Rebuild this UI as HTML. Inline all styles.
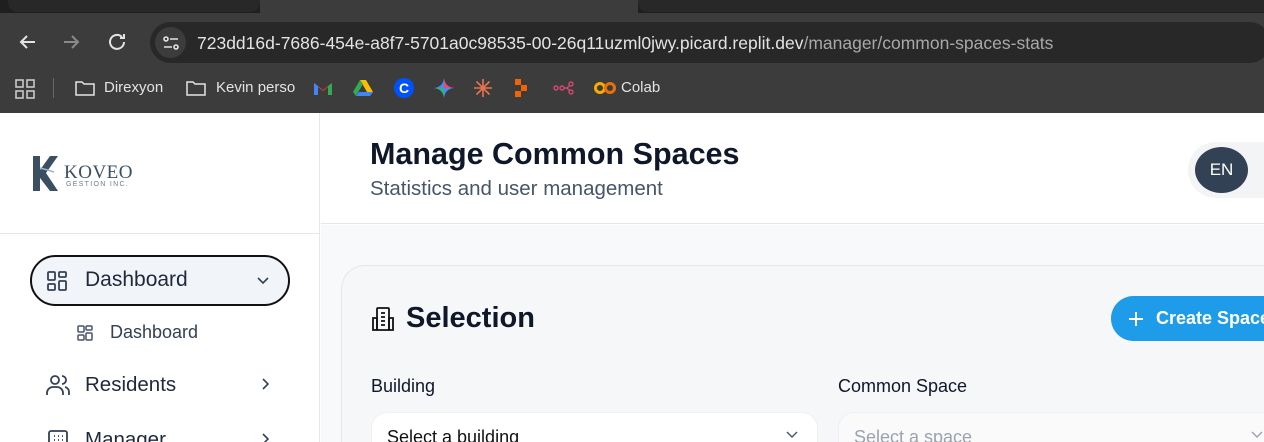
<!DOCTYPE html>
<html style="width:1264px;height:442px;overflow:hidden"><head><style>
*{box-sizing:border-box;margin:0;padding:0}
body{width:1264px;height:442px;overflow:hidden;font-family:"Liberation Sans",sans-serif;background:#fff}
#w{position:relative;width:1264px;height:442px;overflow:hidden}
.abs{position:absolute}
.bm{position:absolute;top:79px;color:#e3e3e3;font-size:15px}
</style></head><body><div id="w">
<div class="abs" style="left:0;top:0;width:1264px;height:113px;background:#3c3c3c"></div>
<div class="abs" style="left:0;top:0;width:1264px;height:13px;background:#1f1f1f"></div>
<div class="abs" style="left:8px;top:-10px;width:252px;height:22px;background:#282828;border-radius:0 0 10px 10px"></div>
<div class="abs" style="left:260px;top:0;width:378px;height:13px;background:#3c3c3c"></div>
<div class="abs" style="left:638px;top:-10px;width:640px;height:22px;background:#282828;border-radius:0 0 0 10px"></div>
<div class="abs" style="left:0;top:13px;width:1264px;height:100px;background:#3c3c3c;border-radius:10px 10px 0 0"></div>
<svg class="abs" style="left:14px;top:30px" width="120" height="24" fill="none" stroke="#e3e3e3" stroke-width="2">
<path d="M21 12H7M13 6l-6 6 6 6"/>
<path d="M50 12h14M58 6l6 6-6 6" stroke="#8a8a8a"/>
<path d="M110 12a7 7 0 1 1-2-5M110 4v4h-4"/>
</svg>
<div class="abs" style="left:150px;top:22px;width:1120px;height:41px;background:#282828;border-radius:21px"></div>
<div class="abs" style="left:155px;top:27px;width:31px;height:31px;background:#3c3c3c;border-radius:50%"></div>
<svg class="abs" style="left:162px;top:34px" width="18" height="18" fill="none" stroke="#e3e3e3" stroke-width="1.6"><circle cx="4" cy="5" r="2"/><path d="M8 5h8M2 13h8"/><circle cx="14" cy="13" r="2"/></svg>
<div class="abs" style="left:197px;top:33px;color:#e3e3e3;font-size:17.5px;white-space:nowrap">723dd16d-7686-454e-a8f7-5701a0c98535-00-26q11uzml0jwy.picard.replit.dev<span style="color:#a8a8a8">/manager/common-spaces-stats</span></div>
<svg class="abs" style="left:15px;top:79px" width="20" height="20" fill="none" stroke="#c8c8c8" stroke-width="1.6"><rect x="1" y="1" width="7" height="7"/><rect x="12" y="1" width="7" height="7"/><rect x="1" y="12" width="7" height="7"/><rect x="12" y="12" width="7" height="7"/></svg>
<div class="abs" style="left:53px;top:78px;width:1px;height:20px;background:#666"></div>
<svg class="abs" style="left:75px;top:80px" width="20" height="16" fill="none" stroke="#e3e3e3" stroke-width="1.5"><path d="M1 2h6l2 2h10v11H1z"/></svg>
<div class="bm" style="left:104px">Direxyon</div>
<svg class="abs" style="left:186px;top:80px" width="20" height="16" fill="none" stroke="#e3e3e3" stroke-width="1.5"><path d="M1 2h6l2 2h10v11H1z"/></svg>
<div class="bm" style="left:216px">Kevin perso</div>
<svg class="abs" style="left:313px;top:80px" width="20" height="16"><path d="M1 3v12h4V7l5 4 5-4v8h4V3l-9 7z" fill="#ea4335"/><path d="M1 3l4 3v9H1z" fill="#4285f4"/><path d="M19 3l-4 3v9h4z" fill="#34a853"/></svg>
<svg class="abs" style="left:353px;top:79px" width="20" height="18"><path d="M7 1h6l7 12h-6z" fill="#fbbc04"/><path d="M7 1L0 13l3 4 7-12z" fill="#34a853"/><path d="M3 17h14l3-4H6z" fill="#4285f4"/></svg>
<div class="abs" style="left:394px;top:78px;width:20px;height:20px;border-radius:50%;background:#0052ff;color:#fff;font-weight:bold;font-size:14px;text-align:center;line-height:20px">C</div>
<svg class="abs" style="left:434px;top:78px" width="20" height="20"><path d="M10 0Q11 9 20 10Q11 11 10 20Q9 11 0 10Q9 9 10 0z" fill="#4a8af4"/><path d="M10 0Q11 9 20 10L10 10z" fill="#e94b6c"/><path d="M0 10Q9 11 10 20L10 10z" fill="#2bb673"/></svg>
<svg class="abs" style="left:473px;top:78px" width="20" height="20" stroke="#e8744f" stroke-width="1.6"><path d="M10 1v18M1 10h18M3.5 3.5l13 13M16.5 3.5l-13 13"/></svg>
<svg class="abs" style="left:515px;top:79px" width="16" height="18" fill="#f26207"><rect x="0" y="0" width="6" height="6"/><rect x="6" y="6" width="6" height="6"/><rect x="0" y="12" width="6" height="6"/></svg>
<svg class="abs" style="left:553px;top:81px" width="22" height="14" fill="none" stroke="#d44a70" stroke-width="1.4"><circle cx="3" cy="7" r="2"/><circle cx="9" cy="7" r="2"/><circle cx="18" cy="3" r="2"/><circle cx="18" cy="11" r="2"/><path d="M11 7h3l3-3M14 7l3 3"/></svg>
<svg class="abs" style="left:594px;top:80px" width="22" height="16" fill="none" stroke="#f9ab00" stroke-width="3"><circle cx="6" cy="8" r="4.5"/><circle cx="16" cy="8" r="4.5" stroke="#e8710a"/></svg>
<div class="bm" style="left:621px">Colab</div>

<div class="abs" style="left:0;top:113px;width:320px;height:329px;background:#fff;border-right:1px solid #e5e7eb"></div>
<div class="abs" style="left:0;top:233px;width:319px;height:1px;background:#e5e7eb"></div>
<svg class="abs" style="left:32px;top:156px" width="30" height="35"><path d="M1 0h7v14L18 0h8L14 17l12 18h-8L8 22v13H1z" fill="#3b4f63"/><path d="M8 12q8 2 14 4" stroke="#9fb5c0" stroke-width="1.5" fill="none"/></svg>
<div class="abs" style="left:64px;top:162px;font-family:'Liberation Serif',serif;font-size:19px;color:#3b4f63;letter-spacing:0.5px">KOVEO</div>
<div class="abs" style="left:66px;top:181px;font-size:7px;color:#6b7c8a;letter-spacing:1.3px">GESTION INC.</div>
<div class="abs" style="left:30px;top:255px;width:260px;height:51px;border:2px solid #111;border-radius:26px;background:#f1f4f9"></div>
<svg class="abs" style="left:46px;top:270px" width="22" height="22" fill="none" stroke="#334155" stroke-width="1.8"><rect x="2" y="2" width="7" height="8" rx="1"/><rect x="13" y="2" width="7" height="5" rx="1"/><rect x="13" y="11" width="7" height="9" rx="1"/><rect x="2" y="14" width="7" height="6" rx="1"/></svg>
<div class="abs" style="left:85px;top:268px;font-size:21px;color:#1e293b">Dashboard</div>
<svg class="abs" style="left:256px;top:273px" width="14" height="14" fill="none" stroke="#334155" stroke-width="1.6"><path d="M2 5l5 5 5-5"/></svg>
<svg class="abs" style="left:76px;top:324px" width="18" height="18" fill="none" stroke="#475569" stroke-width="1.5"><rect x="2" y="2" width="6" height="6" rx="1"/><rect x="10" y="2" width="6" height="4" rx="1"/><rect x="10" y="9" width="6" height="7" rx="1"/><rect x="2" y="11" width="6" height="5" rx="1"/></svg>
<div class="abs" style="left:110px;top:322px;font-size:18px;color:#334155">Dashboard</div>
<svg class="abs" style="left:45px;top:373px" width="26" height="24" fill="none" stroke="#334155" stroke-width="1.8"><circle cx="10" cy="7" r="4"/><path d="M2 22v-2a6 6 0 0 1 6-6h4a6 6 0 0 1 6 6v2M17 3a4 4 0 0 1 0 8M20 14a5 5 0 0 1 4 5v3"/></svg>
<div class="abs" style="left:85px;top:373px;font-size:20.5px;color:#1e293b">Residents</div>
<svg class="abs" style="left:258px;top:377px" width="14" height="14" fill="none" stroke="#334155" stroke-width="1.6"><path d="M5 2l5 5-5 5"/></svg>
<svg class="abs" style="left:47px;top:429px" width="22" height="13" fill="none" stroke="#334155" stroke-width="1.8"><rect x="2" y="2" width="18" height="20" rx="2"/><path d="M7 7h1M11 7h1M15 7h1M7 11h1M11 11h1M15 11h1"/></svg>
<div class="abs" style="left:85px;top:428px;height:14px;overflow:hidden;font-size:20.5px;line-height:24px;color:#1e293b">Manager</div>
<svg class="abs" style="left:258px;top:432px" width="14" height="10" fill="none" stroke="#334155" stroke-width="1.6"><path d="M5 2l5 5-5 5"/></svg>

<div class="abs" style="left:321px;top:113px;width:943px;height:111px;background:#fff;border-bottom:1px solid #e5e7eb"></div>
<div class="abs" style="left:321px;top:225px;width:943px;height:217px;background:#f8f9fb"></div>
<div class="abs" style="left:370px;top:137px;font-size:30.5px;font-weight:bold;color:#0f172a;white-space:nowrap">Manage Common Spaces</div>
<div class="abs" style="left:370px;top:177px;font-size:20.5px;color:#475569;white-space:nowrap">Statistics and user management</div>
<div class="abs" style="left:1188px;top:142px;width:76px;height:56px;background:#f3f4f6;border-radius:28px 0 0 28px"></div>
<div class="abs" style="left:1195px;top:147px;width:53px;height:46px;background:#334155;border-radius:50%;color:#fff;font-size:17px;text-align:center;line-height:46px">EN</div>
<div class="abs" style="left:341px;top:265px;width:923px;height:177px;background:#f6f7f8;border:1px solid #e5e7eb;border-right:none;border-bottom:none;border-radius:24px 0 0 0"></div>
<svg class="abs" style="left:371px;top:306px" width="24" height="26" fill="none" stroke="#111" stroke-width="1.8"><rect x="6" y="2" width="12" height="22" rx="1"/><path d="M2 12h4v12H2zM18 12h4v12h-4zM10 7h4M10 11h4M10 15h4M10 19h4"/></svg>
<div class="abs" style="left:406px;top:302px;font-size:29px;font-weight:bold;color:#0f172a">Selection</div>
<div class="abs" style="left:1111px;top:296px;width:153px;height:45px;background:#1e9be9;border-radius:23px 0 0 23px"></div>
<svg class="abs" style="left:1127px;top:310px" width="18" height="18" stroke="#fff" stroke-width="2"><path d="M9 2v14M2 9h14"/></svg>
<div class="abs" style="left:1156px;top:308px;width:108px;overflow:hidden;font-size:18px;font-weight:bold;color:#fff;white-space:nowrap">Create Space</div>
<div class="abs" style="left:371px;top:376px;font-size:18px;color:#0f172a">Building</div>
<div class="abs" style="left:838px;top:376px;font-size:18px;color:#0f172a">Common Space</div>
<div class="abs" style="left:371px;top:412px;width:447px;height:30px;background:#fff;border:1px solid #eef0f2;border-bottom:none;border-radius:16px 16px 0 0"></div>
<div class="abs" style="left:387px;top:426px;height:16px;overflow:hidden;font-size:18px;line-height:22px;color:#111">Select a building</div>
<svg class="abs" style="left:785px;top:430px" width="14" height="10" fill="none" stroke="#475569" stroke-width="1.4"><path d="M2 2l5 5 5-5"/></svg>
<div class="abs" style="left:838px;top:412px;width:426px;height:30px;background:#fafafa;border:1px solid #eef0f2;border-bottom:none;border-right:none;border-radius:16px 0 0 0"></div>
<div class="abs" style="left:854px;top:426px;height:16px;overflow:hidden;font-size:18px;line-height:22px;color:#9ca3af">Select a space</div>
<svg class="abs" style="left:1250px;top:430px" width="14" height="10" fill="none" stroke="#9ca3af" stroke-width="1.4"><path d="M2 2l5 5 5-5"/></svg>
</div></body></html>
